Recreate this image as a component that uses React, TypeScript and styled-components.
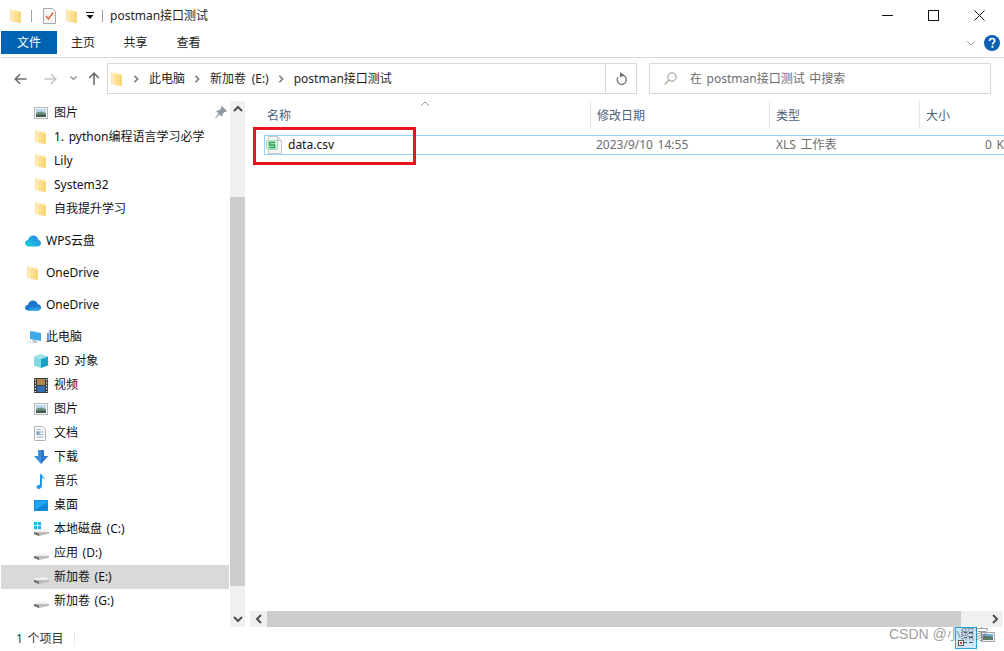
import React from 'react';
import styled, { createGlobalStyle } from 'styled-components';

const Global = createGlobalStyle`
  html, body { margin: 0; padding: 0; background: #fff; }
  #root { width: 1004px; height: 651px; overflow: hidden; }
  * { box-sizing: border-box; }
`;

const Win = styled.div`
  position: relative;
  width: 1004px;
  height: 651px;
  display: flex;
  flex-direction: column;
  background: #fff;
  overflow: hidden;
  font: 12px/16px "Noto Sans", "Noto Sans CJK SC", sans-serif;
  word-spacing: 1.5px;
  color: #1a1a1a;
`;

const TitleBar = styled.div`
  height: 31px;
  display: flex;
  align-items: center;
  flex: none;
`;
const QuickBar = styled.div`
  display: flex;
  align-items: center;
  padding-left: 10px;
  height: 31px;
`;
const QuickSep = styled.span<{ $m: string }>`
  width: 1px;
  height: 12px;
  background: #a0a0a0;
  margin: ${p => p.$m};
`;
const TitleText = styled.span`
  margin-left: 7px;
  color: #1f1f1f;
`;
const WinButtons = styled.div`
  margin-left: auto;
  display: flex;
  height: 31px;
  align-items: center;
  padding-right: 19px;
  gap: 35px;
`;

const Ribbon = styled.div`
  height: 27px;
  flex: none;
  display: flex;
  align-items: flex-start;
  padding-left: 1px;
  border-bottom: 1px solid #d9d9d9;
  margin-left: 1px;
`;
const FileTab = styled.div`
  width: 56px;
  height: 23px;
  margin-left: -1px;
  background: #0063b1;
  color: #fff;
  display: flex;
  align-items: center;
  justify-content: center;
  font-size: 12px;
`;
const RibbonTab = styled.div<{ $w: number }>`
  width: ${p => p.$w}px;
  height: 23px;
  display: flex;
  align-items: center;
  justify-content: center;
  color: #222;
`;
const RibbonRight = styled.div`
  margin-left: auto;
  height: 23px;
  display: flex;
  align-items: center;
  gap: 8px;
  padding-right: 4px;
`;

const Toolbar = styled.div`
  height: 42px;
  flex: none;
  display: flex;
  align-items: flex-start;
  padding-top: 5px;
`;
const NavButtons = styled.div`
  width: 107px;
  height: 31px;
  flex: none;
  display: flex;
  align-items: center;
  padding-left: 14px;
`;
const AddressBar = styled.div`
  width: 530px;
  height: 31px;
  flex: none;
  border: 1px solid #d9d9d9;
  display: flex;
  align-items: center;
`;
const Crumbs = styled.div`
  flex: 1;
  display: flex;
  align-items: center;
  padding-left: 3px;
  height: 100%;
  color: #1f1f1f;
`;
const Crumb = styled.span`
  margin: 0 8px 0 9px;
  word-spacing: 2.5px;
`;
const Refresh = styled.div`
  width: 31px;
  height: 100%;
  border-left: 1px solid #d9d9d9;
  display: flex;
  align-items: center;
  justify-content: center;
`;
const SearchBox = styled.div`
  width: 342px;
  height: 31px;
  margin-left: 12px;
  flex: none;
  border: 1px solid #d9d9d9;
  display: flex;
  align-items: center;
  padding-left: 14px;
  gap: 13px;
  color: #6d6d6d;
`;

const Main = styled.div`
  flex: 1;
  min-height: 0;
  display: flex;
`;
const NavPane = styled.div`
  width: 246px;
  flex: none;
  display: flex;
`;
const NavList = styled.div`
  width: 230px;
  flex: none;
  overflow: hidden;
  padding: 1px 1px 0;
  height: 527px;
`;
const NavRow = styled.div<{ $level: number; $selected?: boolean; $gap?: boolean }>`
  height: 24px;
  display: flex;
  align-items: center;
  position: relative;
  padding-left: ${p => (p.$level === 2 ? 33 : 24)}px;
  margin-top: ${p => (p.$gap ? 8 : 0)}px;
  background: ${p => (p.$selected ? '#d9d9d9' : 'transparent')};
  color: #111;
  white-space: nowrap;
`;
const NavIcon = styled.span<{ $level: number }>`
  width: ${p => (p.$level === 2 ? 20 : 21)}px;
  height: 16px;
  flex: none;
  display: flex;
  align-items: center;
  justify-content: flex-start;
`;
const FolderSlot = styled.span<{ $ml: number }>`
  display: flex;
  margin-left: ${p => p.$ml}px;
`;
const PinMark = styled.span`
  position: absolute;
  right: 2px;
  top: 5px;
  display: flex;
`;

const VScroll = styled.div`
  width: 15px;
  flex: none;
  margin-top: 1px;
  background: #f0f0f0;
  display: flex;
  flex-direction: column;
  height: 526px;
`;
const ScrollBtn = styled.div`
  height: 16px;
  flex: none;
  display: flex;
  align-items: center;
  justify-content: center;
`;
const VGap = styled.div<{ $h: number }>`
  height: ${p => p.$h}px;
  flex: none;
`;
const VThumb = styled.div`
  height: 389px;
  flex: none;
  background: #cdcdcd;
`;

const ListPane = styled.div`
  flex: 1;
  min-width: 0;
  display: flex;
  flex-direction: column;
  padding-top: 1px;
`;
const HeaderRow = styled.div`
  height: 27px;
  flex: none;
  display: grid;
  grid-template-columns: 344px 179px 150px 1fr;
  position: relative;
`;
const HeaderCell = styled.div<{ $first?: boolean }>`
  padding-left: ${p => (p.$first ? 21 : 6)}px;
  padding-top: 3px;
  display: flex;
  align-items: center;
  color: #4c607a;
  border-left: ${p => (p.$first ? '0' : '1px solid #e5e5e5')};
`;
const SortCaret = styled.span`
  position: absolute;
  left: 174px;
  top: 0;
  display: flex;
`;
const Rows = styled.div`
  flex: 1;
  padding: 7px 0 0 18px;
  min-height: 0;
`;
const FileRow = styled.div`
  height: 20px;
  display: grid;
  grid-template-columns: 324px 180px 150px 1fr;
  border: 1px solid #99d1ff;
  border-right: 0;
  align-items: center;
`;
const NameCell = styled.div`
  display: flex;
  align-items: center;
  padding-left: 1px;
  gap: 6px;
  color: #111;
`;
const MetaCell = styled.div<{ $right?: boolean }>`
  color: #6d6d6d;
  white-space: nowrap;
  padding-left: ${p => (p.$right ? 0 : 7)}px;
  text-align: ${p => (p.$right ? 'right' : 'left')};
`;
const HScroll = styled.div`
  height: 16px;
  flex: none;
  margin-left: 4px;
  margin-right: 1px;
  background: #f0f0f0;
  display: flex;
`;
const HBtn = styled.div`
  width: 17px;
  flex: none;
  display: flex;
  align-items: center;
  justify-content: center;
`;
const HThumb = styled.div`
  width: 694px;
  flex: none;
  background: #cdcdcd;
`;
const HFill = styled.div`
  flex: 1;
`;

const StatusBar = styled.div`
  height: 24px;
  flex: none;
  display: flex;
  align-items: center;
  padding-left: 16px;
  color: #333;
`;
const StatusSep = styled.span`
  width: 1px;
  height: 14px;
  background: #e8e8e8;
  margin-left: 11px;
`;
const ViewSwitch = styled.div`
  margin-left: auto;
  display: flex;
  align-items: flex-start;
  height: 24px;
  padding-right: 9px;
  gap: 4px;
`;
const ViewActive = styled.div`
  width: 22px;
  height: 22px;
  background: #cce8ff;
  border: 1px solid #26a0da;
  display: flex;
  align-items: center;
  justify-content: center;
`;
const ViewIdle = styled.div`
  width: 14px;
  height: 20px;
  display: flex;
  align-items: center;
  justify-content: center;
`;

const RedMark = styled.div`
  position: absolute;
  left: 253px;
  top: 127px;
  width: 163px;
  height: 38px;
  border: 3px solid #e8141f;
  pointer-events: none;
`;
const Watermark = styled.div`
  position: absolute;
  left: 889px;
  top: 625px;
  font: 14px/18px "Liberation Sans", "Noto Sans CJK SC", sans-serif;
  word-spacing: 0;
  color: rgba(90, 90, 90, 0.6);
  white-space: nowrap;
  pointer-events: none;
`;

/* ---------- icons ---------- */
const Folder = () => (
  <svg width="11" height="14" viewBox="0 0 11 14">
    <path d="M0 .5h2.500l1 1H8v10.500H0z" fill="#fff0c4" />
    <path d="M0 .5h1.200v11.500H0z" fill="#f9e2a6" />
    <path d="M2 1.300 8.500 2.400 10.800 3v11L2 12.800z" fill="#ffdf8e" />
    <path d="M2 1.300 4 1.700v11.300L2 12.800z" fill="#ffeab2" />
    <path d="M8.500 2.400 10.800 3v11H8.500z" fill="#fbd574" />
  </svg>
);
const PicIcon = () => (
  <svg width="14" height="12" viewBox="0 0 14 12">
    <rect x=".5" y=".5" width="13" height="11" fill="#f3f5f7" stroke="#b4b8bc" />
    <rect x="2" y="2" width="10" height="4" fill="#bcd8ee" />
    <path d="M2 6c3-2 6-1 10 0v4H2z" fill="#6f8f7a" />
    <path d="M2 8c3-1 6-1 10 0v2H2z" fill="#3f5d50" />
  </svg>
);
const WpsCloud = () => (
  <svg width="16" height="12" viewBox="0 0 16 12">
    <defs>
      <linearGradient id="wps" x1="0" y1="1" x2="1" y2="0">
        <stop offset="0" stopColor="#14d6d2" />
        <stop offset="1" stopColor="#2b7ff0" />
      </linearGradient>
    </defs>
    <path d="M4 11.500C1.700 11.500 0 10.200 0 8.300c0-1.700 1.300-3 3-3.200C3.600 2.300 5.900.5 8.300.5c2.600 0 4.600 1.800 5 4.200 1.500.4 2.700 1.700 2.700 3.300 0 2-1.500 3.500-3.500 3.500z" fill="url(#wps)" />
  </svg>
);
const OneCloud = () => (
  <svg width="16" height="11" viewBox="0 0 16 11">
    <path d="M3 10.500C1.200 10.500 0 9.200 0 7.700 0 6.200 1.200 5 2.800 5 3.400 2.500 5.500.5 8 .5c2.300 0 4.200 1.500 4.800 3.700C14.600 4.300 16 5.700 16 7.500c0 1.700-1.300 3-3 3z" fill="#1c78cf" />
    <path d="M3 10.500h10c1.700 0 3-1.300 3-3H5.500z" fill="#2a9be6" />
  </svg>
);
const PcIcon = () => (
  <svg width="17" height="15" viewBox="0 0 17 15">
    <path d="M5 1 16 3v8L5 9z" fill="#3ea7e8" />
    <path d="M5 1 7 .8 16 3h-2z" fill="#9bd3f5" />
    <path d="M7 10l5 1v2l-4-1z" fill="#a9b5bf" />
    <path d="M1 12l7 1.500 3-.5-7-2z" fill="#dfe3e6" />
  </svg>
);
const CubeIcon = () => (
  <svg width="14" height="14" viewBox="0 0 14 14">
    <path d="M7 0 14 2.500 7 5 0 2.500z" fill="#9be3e8" />
    <path d="M0 2.500 7 5v9L0 11.500z" fill="#7fdbe0" />
    <path d="M14 2.500 7 5v9l7-2.500z" fill="#14a3c7" />
  </svg>
);
const VideoIcon = () => (
  <svg width="14" height="15" viewBox="0 0 14 15">
    <rect width="14" height="15" fill="#3c3c3c" />
    <rect x="3" y="1" width="8" height="6" fill="#a98b4a" />
    <rect x="3" y="8" width="8" height="6" fill="#2e6fb5" />
    <path d="M4 3h2v2H4zM8 2h2v2H8z" fill="#d66a3a" />
    <path d="M.8 1h1.200v1.500H.8zM.8 4h1.200v1.500H.8zM.8 7h1.200v1.500H.8zM.8 10h1.200v1.500H.8zM.8 13h1.200v1H.8zM12 1h1.200v1.500H12zM12 4h1.200v1.500H12zM12 7h1.200v1.500H12zM12 10h1.200v1.500H12zM12 13h1.200v1H12z" fill="#dcdcdc" />
  </svg>
);
const DocIcon = () => (
  <svg width="12" height="15" viewBox="0 0 12 15">
    <path d="M.5.500h8l3 3v11H.5z" fill="#fbfbfb" stroke="#b3b3b3" />
    <path d="M2.500 3h4v1h-4zM2.500 5.500h7v1h-7zM2.500 8h7v1h-7zM2.500 10.500h7v1h-7z" fill="#8fb2cf" />
    <rect x="2.500" y="5.500" width="3" height="3" fill="#6aa0cc" />
  </svg>
);
const DownIcon = () => (
  <svg width="14" height="14" viewBox="0 0 14 14">
    <path d="M4 0h6v6h4l-7 8-7-8h4z" fill="#3d8fe0" />
    <path d="M7 0h3v6h4l-7 8z" fill="#2d78c8" />
  </svg>
);
const NoteIcon = () => (
  <svg width="14" height="15" viewBox="0 0 14 15">
    <path d="M6 0h1.500c.3 2.500 3 3 3.500 6-1-1.300-2-2-3-2.200V11.500C8 13.500 6.300 15 4.500 15 3.300 15 2.500 14.200 2.500 13.100c0-1.500 1.500-2.600 3.500-2.300z" fill="#1e9be8" />
  </svg>
);
const DesktopIcon = () => (
  <svg width="14" height="11" viewBox="0 0 14 11">
    <rect width="14" height="11" fill="#118fe6" />
    <rect x="1" y="1" width="12" height="9" fill="#1fa5f0" />
    <path d="M1 10 13 3v7z" fill="#0f84d8" />
  </svg>
);
const DriveIcon = ({ win }: { win?: boolean }) => (
  <svg width="15" height="15" viewBox="0 0 15 15" style={{ marginTop: win ? 0 : 1 }}>
    <path d="M3 8 12 7l3 3H0z" fill="#f0f0f0" />
    <path d="M0 10h15v1.800L5 14 0 12z" fill="#bdbdbd" />
    <path d="M0 10v2l5 2v-2.500z" fill="#6e6e6e" />
    {win && <path d="M0 0h3v3.200H0zM3.800 0h3.200v3.200H3.800zM0 4h3v3.200H0zM3.800 4h3.200v3.200H3.800z" fill="#16b5ef" />}
  </svg>
);
const NetBlip = () => (
  <svg width="16" height="14" viewBox="0 0 16 14">
    <path d="M6 6h6v2H6z" fill="#5fb4e6" />
  </svg>
);
const Pin = () => (
  <svg width="12" height="12" viewBox="0 0 12 12">
    <path d="M7 0 12 5l-1 1-1-.3-2.400 2.400.2 1.700-1 1L4.500 8.500 1 12l-1-.1L3.500 7.500 1.300 5.200l1-1 1.700.2L6.400 2 6.100 1z" fill="#8f9aa3" />
  </svg>
);
const Chev = ({ dir, color = '#505050', size = 10 }: { dir: 'up' | 'down' | 'left' | 'right'; color?: string; size?: number }) => {
  const pts = { up: '1,7 5,3 9,7', down: '1,3 5,7 9,3', left: '7,1 3,5 7,9', right: '3,1 7,5 3,9' }[dir];
  return (
    <svg width={size} height={size} viewBox="0 0 10 10">
      <polyline points={pts} fill="none" stroke={color} strokeWidth="2" />
    </svg>
  );
};
const Arrow = ({ flip, color }: { flip?: boolean; color: string }) => (
  <svg width="13" height="12" viewBox="0 0 13 12" style={flip ? { transform: 'scaleX(-1)' } : undefined}>
    <path d="M12.500 6H1.500M6 1.200 1.200 6 6 10.800" fill="none" stroke={color} strokeWidth="1.500" />
  </svg>
);
const UpArrow = () => (
  <svg width="12" height="13" viewBox="0 0 12 13">
    <path d="M6 13V1.500M1.200 6 6 1.200 10.800 6" fill="none" stroke="#6d6d6d" strokeWidth="1.600" />
  </svg>
);
const Spacer = styled.span<{ $w: number }>`
  width: ${p => p.$w}px;
  flex: none;
  display: inline-flex;
  justify-content: center;
`;
const RefreshIcon = () => (
  <svg width="12" height="13" viewBox="0 0 12 13">
    <path d="M7.500 2.300A4.600 4.600 0 1 1 2.500 4" fill="none" stroke="#6f6f6f" strokeWidth="1.200" transform="translate(.5 1)" />
    <path d="M5 0 9.500 3.200 5 5.500z" fill="#6f6f6f" />
  </svg>
);
const SearchIcon = () => (
  <svg width="13" height="13" viewBox="0 0 13 13">
    <circle cx="8" cy="5" r="4.200" fill="none" stroke="#8c8c8c" />
    <path d="M5 8 .7 12.500" stroke="#b0a08c" strokeWidth="1.100" />
  </svg>
);
const CheckDoc = () => (
  <svg width="13" height="16" viewBox="0 0 13 16">
    <path d="M.5.500h9l3 3v12H.5z" fill="#f6f6f6" stroke="#a8a8a8" />
    <path d="M3 8l2.500 3L10 4.500" fill="none" stroke="#e8653a" strokeWidth="1.400" />
  </svg>
);
const Dropdown = () => (
  <svg width="8" height="7" viewBox="0 0 8 7">
    <path d="M0 0h8v1H0zM.5 3h7L4 7z" fill="#111" />
  </svg>
);
const Help = () => (
  <svg width="16" height="16" viewBox="0 0 16 16">
    <circle cx="8" cy="8" r="8" fill="#0a5fb4" />
    <path d="M5.500 6c0-1.500 1.100-2.500 2.600-2.500S10.700 4.400 10.700 5.700c0 1.800-2.200 2-2.200 3.800" fill="none" stroke="#fff" strokeWidth="1.700" />
    <rect x="7.500" y="10.700" width="2" height="2" fill="#fff" />
  </svg>
);
const CsvIcon = () => (
  <svg width="16" height="18" viewBox="0 0 16 18">
    <path d="M2.500.500h9l4 4v13h-13z" fill="#f6f6f6" stroke="#c8c8c8" />
    <path d="M11.500.500v4h4" fill="#e4e4e4" stroke="#c8c8c8" />
    <rect x=".5" y="4.500" width="11" height="9" rx="1" fill="#cdebd7" stroke="#a8dcb9" />
    <path d="M9 6.500H3.500v2.500H8.500v2.500H3" fill="none" stroke="#2aa457" strokeWidth="1.400" />
  </svg>
);
const DetailsIcon = () => (
  <svg width="18" height="16" viewBox="0 0 18 16">
    <path d="M7 2.500h3M12 2.500h4M7 7.500h3M12 7.500h4M7 12.500h3M12 12.500h4" stroke="#555" />
    <path d="M4.500 0v10" stroke="#777" strokeDasharray="1 1" />
    <rect x="1.500" y="10.500" width="5" height="5" fill="#fff" stroke="#555" />
    <rect x="3" y="12" width="2" height="2" fill="#d23c3c" />
  </svg>
);
const TilesIcon = () => (
  <svg width="14" height="10" viewBox="0 0 14 10">
    <rect x=".5" y=".5" width="13" height="9" fill="#eef2f5" stroke="#a8a8a8" />
    <rect x="2" y="2" width="10" height="3" fill="#6fb2e0" />
    <path d="M2 5c3-2 7-1 10 0v3H2z" fill="#5a7d68" />
  </svg>
);

type Item = { label?: string; level: number; icon: React.ReactNode; gap?: boolean; selected?: boolean; pin?: boolean };
const NavFolder = ({ ml }: { ml: number }) => <FolderSlot $ml={ml}><Folder /></FolderSlot>;
const items: Item[] = [
  { label: '图片', level: 2, icon: <PicIcon />, pin: true },
  { label: '1. python编程语言学习必学', level: 2, icon: <NavFolder ml={1} /> },
  { label: 'Lily', level: 2, icon: <NavFolder ml={1} /> },
  { label: 'System32', level: 2, icon: <NavFolder ml={1} /> },
  { label: '自我提升学习', level: 2, icon: <NavFolder ml={1} /> },
  { label: 'WPS云盘', level: 1, icon: <WpsCloud />, gap: true },
  { label: 'OneDrive', level: 1, icon: <NavFolder ml={2} />, gap: true },
  { label: 'OneDrive', level: 1, icon: <OneCloud />, gap: true },
  { label: '此电脑', level: 1, icon: <PcIcon />, gap: true },
  { label: '3D 对象', level: 2, icon: <CubeIcon /> },
  { label: '视频', level: 2, icon: <VideoIcon /> },
  { label: '图片', level: 2, icon: <PicIcon /> },
  { label: '文档', level: 2, icon: <DocIcon /> },
  { label: '下载', level: 2, icon: <DownIcon /> },
  { label: '音乐', level: 2, icon: <NoteIcon /> },
  { label: '桌面', level: 2, icon: <DesktopIcon /> },
  { label: '本地磁盘 (C:)', level: 2, icon: <DriveIcon win /> },
  { label: '应用 (D:)', level: 2, icon: <DriveIcon /> },
  { label: '新加卷 (E:)', level: 2, icon: <DriveIcon />, selected: true },
  { label: '新加卷 (G:)', level: 2, icon: <DriveIcon /> },
  { level: 1, icon: <NetBlip />, gap: true },
];

export default function App() {
  return (
    <Win>
      <Global />
      <TitleBar>
        <QuickBar>
          <Folder />
          <QuickSep $m="0 11px 0 10px" />
          <CheckDoc />
          <Spacer $w={10} />
          <Folder />
          <Spacer $w={9} />
          <Dropdown />
          <QuickSep $m="0 0 0 8px" />
        </QuickBar>
        <TitleText>postman接口测试</TitleText>
        <WinButtons>
          <svg width="11" height="11" viewBox="0 0 11 11"><path d="M0 5.500h11" stroke="#111" /></svg>
          <svg width="11" height="11" viewBox="0 0 11 11"><rect x=".5" y=".5" width="10" height="10" fill="none" stroke="#111" /></svg>
          <svg width="11" height="11" viewBox="0 0 11 11"><path d="M.5.500l10 10M10.500.500l-10 10" stroke="#111" /></svg>
        </WinButtons>
      </TitleBar>

      <Ribbon>
        <FileTab>文件</FileTab>
        <RibbonTab $w={52}>主页</RibbonTab>
        <RibbonTab $w={53}>共享</RibbonTab>
        <RibbonTab $w={53}>查看</RibbonTab>
        <RibbonRight>
          <svg width="10" height="6" viewBox="0 0 10 6"><polyline points="1,1 5,5 9,1" fill="none" stroke="#a0a0a0" /></svg>
          <Help />
        </RibbonRight>
      </Ribbon>

      <Toolbar>
        <NavButtons>
          <Arrow color="#6d6d6d" />
          <Spacer $w={17} />
          <Arrow flip color="#c4c4c4" />
          <Spacer $w={13} />
          <svg width="7" height="5" viewBox="0 0 7 5"><polyline points=".5,.5 3.500,3.500 6.500,.5" fill="none" stroke="#8a8a8a" strokeWidth="1.200" /></svg>
          <Spacer $w={11} />
          <UpArrow />
        </NavButtons>
        <AddressBar>
          <Crumbs>
            <Folder />
            <Spacer $w={10} />
            <Chev dir="right" color="#7a7a7a" size={8} />
            <Crumb>此电脑</Crumb>
            <Chev dir="right" color="#7a7a7a" size={8} />
            <Crumb>新加卷 (E:)</Crumb>
            <Chev dir="right" color="#7a7a7a" size={8} />
            <Crumb>postman接口测试</Crumb>
          </Crumbs>
          <Refresh><RefreshIcon /></Refresh>
        </AddressBar>
        <SearchBox>
          <SearchIcon />
          <span>在 postman接口测试 中搜索</span>
        </SearchBox>
      </Toolbar>

      <Main>
        <NavPane>
          <NavList>
            {items.map((it, i) => (
              <NavRow key={i} $level={it.level} $selected={it.selected} $gap={it.gap}>
                <NavIcon $level={it.level}>{it.icon}</NavIcon>
                {it.label}
                {it.pin && <PinMark><Pin /></PinMark>}
              </NavRow>
            ))}
          </NavList>
          <VScroll>
            <ScrollBtn><Chev dir="up" /></ScrollBtn>
            <VGap $h={80} />
            <VThumb />
            <VGap $h={25} />
            <ScrollBtn><Chev dir="down" /></ScrollBtn>
          </VScroll>
        </NavPane>
        <ListPane>
          <HeaderRow>
            <SortCaret>
              <svg width="10" height="6" viewBox="0 0 10 6"><polyline points="1,5 5,1 9,5" fill="none" stroke="#9a9a9a" /></svg>
            </SortCaret>
            <HeaderCell $first>名称</HeaderCell>
            <HeaderCell>修改日期</HeaderCell>
            <HeaderCell>类型</HeaderCell>
            <HeaderCell>大小</HeaderCell>
          </HeaderRow>
          <Rows>
            <FileRow>
              <NameCell><CsvIcon />data.csv</NameCell>
              <MetaCell>2023/9/10 14:55</MetaCell>
              <MetaCell>XLS 工作表</MetaCell>
              <MetaCell $right>0 K</MetaCell>
            </FileRow>
          </Rows>
          <HScroll>
            <HBtn><Chev dir="left" /></HBtn>
            <HThumb />
            <HFill />
            <HBtn><Chev dir="right" /></HBtn>
          </HScroll>
        </ListPane>
      </Main>

      <StatusBar>
        1 个项目
        <StatusSep />
        <ViewSwitch>
          <ViewActive><DetailsIcon /></ViewActive>
          <ViewIdle><TilesIcon /></ViewIdle>
        </ViewSwitch>
      </StatusBar>

      <RedMark />
      <Watermark>CSDN @小照家</Watermark>
    </Win>
  );
}
